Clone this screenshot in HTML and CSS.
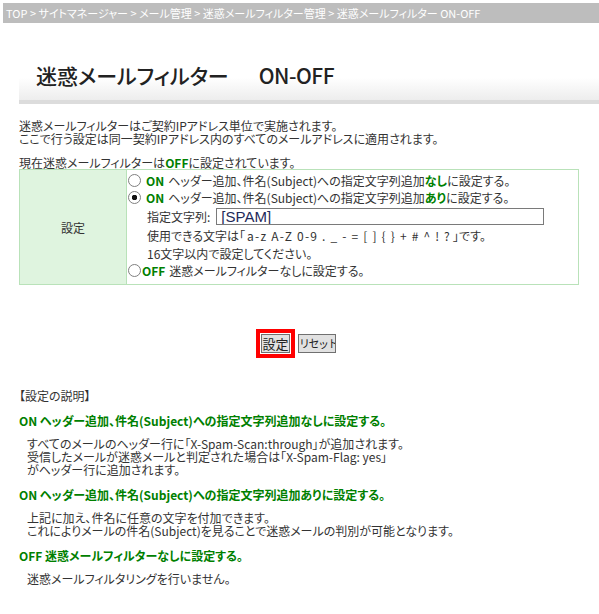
FILE: index.html
```html
<!DOCTYPE html>
<html lang="ja">
<head>
  <meta charset="UTF-8" />
  <meta name="viewport" content="width=device-width, initial-scale=1" />
  <title>迷惑メールフィルター ON-OFF</title>
  <link rel="stylesheet" href="styles.css">
</head>
<body>
  <div class="crumbs">TOP &gt; サイトマネージャー &gt; メール管理 &gt; 迷惑メールフィルター管理 &gt; 迷惑メールフィルター ON-OFF</div>

  <div class="content">
    <h1 class="page-title">迷惑メールフィルター<span class="title-en">ON-OFF</span></h1>

    <p class="intro">迷惑メールフィルターはご契約IPアドレス単位で実施されます。<br>ここで行う設定は同一契約IPアドレス内のすべてのメールアドレスに適用されます。</p>

    <p class="status">現在迷惑メールフィルターは<b class="green">OFF</b>に設定されています。</p>

    <form class="filter-form" onsubmit="return false;">
      <table class="setting">
        <tr>
          <th>設定</th>
          <td>
            <label class="opt"><input type="radio" name="mode" value="on"><b class="green mode">ON</b>ヘッダー追加、件名(Subject)への指定文字列追加<b class="green">なし</b>に設定する。</label>
            <label class="opt"><input type="radio" name="mode" value="tag" checked><b class="green mode">ON</b>ヘッダー追加、件名(Subject)への指定文字列追加<b class="green">あり</b>に設定する。</label>
            <div class="sub sub-input">指定文字列: <input type="text" class="tag" value="[SPAM]"></div>
            <div class="sub">使用できる文字は「<span class="chars">a-z A-Z 0-9 . _ - = [ ] { } + # ^ ! ?</span>」です。</div>
            <div class="sub">16文字以内で設定してください。</div>
            <label class="opt opt-off"><input type="radio" name="mode" value="off"><b class="green mode">OFF</b>迷惑メールフィルターなしに設定する。</label>
          </td>
        </tr>
      </table>

      <div class="actions">
        <button type="submit" class="btn btn-submit">設定</button>
        <button type="reset" class="btn btn-reset">リセット</button>
      </div>
    </form>

    <div class="help">
      <p class="help-title">【設定の説明】</p>
      <dl>
        <dt>ON ヘッダー追加、件名(Subject)への指定文字列追加なしに設定する。</dt>
        <dd>すべてのメールのヘッダー行に「X-Spam-Scan:through」が追加されます。<br>受信したメールが迷惑メールと判定された場合は「X-Spam-Flag: yes」<br>がヘッダー行に追加されます。</dd>
        <dt>ON ヘッダー追加、件名(Subject)への指定文字列追加ありに設定する。</dt>
        <dd>上記に加え、件名に任意の文字を付加できます。<br>これによりメールの件名(Subject)を見ることで迷惑メールの判別が可能となります。</dd>
        <dt>OFF 迷惑メールフィルターなしに設定する。</dt>
        <dd>迷惑メールフィルタリングを行いません。</dd>
      </dl>
    </div>
  </div>
</body>
</html>
```

FILE: styles.css
```css
:root {
  --text: #333;
  --green: #008000;
  --line: #b9e2b9;
  --cell: #dff4df;
}

* {
  box-sizing: border-box;
}

body {
  margin: 3px 0 0 3px;
  font-family: "Noto Sans CJK JP", sans-serif;
  font-size: 12px;
  font-feature-settings: "palt";
  color: var(--text);
  background: #fff;
}

.crumbs {
  height: 20px;
  line-height: 20px;
  padding-left: 3px;
  font-size: 11px;
  background: #bdbdbd;
  color: #fff;
  white-space: nowrap;
}

.content {
  padding: 0 21px 40px 16px;
}

.page-title {
  margin: 27px -21px 0 0;
  height: 54px;
  padding-left: 17px;
  line-height: 50px;
  font-size: 21px;
  font-weight: 500;
  color: #222;
  background: linear-gradient(to bottom, #fff 0, #fff 55%, #ededed 100%);
  border-bottom: 4px solid #dcdcdc;
}

.title-en {
  margin-left: 30px;
  letter-spacing: -0.5px;
}

.intro {
  margin: 15px 0 0;
  line-height: 13px;
}

.status {
  margin: 11px 0 0;
  line-height: 13px;
}

.green {
  color: var(--green);
  font-weight: bold;
}

.setting {
  width: 560px;
  border-collapse: collapse;
  border: 1px solid var(--line);
}

.setting th {
  width: 107px;
  font-weight: normal;
  background: var(--cell);
  border-right: 1px solid var(--line);
}

.setting td {
  padding: 2px 2px 5px 1px;
}

.opt,
.sub {
  display: flex;
  align-items: center;
  height: 17px;
  white-space: nowrap;
}

.opt input {
  appearance: none;
  -webkit-appearance: none;
  width: 13px;
  height: 13px;
  margin: 0 5px 0 0;
  border: 1px solid #808080;
  border-radius: 50%;
  background: #fff;
}

.opt-off input {
  margin-right: 1px;
}

.opt input:checked {
  background: radial-gradient(circle, #111 0, #111 2.5px, #fff 3px);
}

.mode {
  margin-right: 4px;
}

.sub {
  height: 18px;
  padding-left: 19px;
}

.sub-input {
  height: 20px;
}

.chars {
  margin: 0 2px;
  letter-spacing: 1.2px;
}

.tag {
  width: 328px;
  height: 17px;
  margin: 1px 0 0 6px;
  padding: 0 4px;
  border: 1px solid #7a7a7a;
  font-family: "Liberation Sans", sans-serif;
  font-size: 15px;
  color: #1e2a5a;
}

.actions {
  display: flex;
  justify-content: center;
  gap: 8px;
  margin-top: 49px;
}

.btn {
  height: 19px;
  padding: 0;
  overflow: hidden;
  white-space: nowrap;
  font-family: inherit;
  font-size: 13px;
  line-height: 17px;
  color: #222;
  background: #e1e1e1;
  border: 1px solid #707070;
  border-radius: 0;
}

.btn-submit {
  width: 29px;
  outline: 4px solid #f00;
  outline-offset: 1px;
}

.btn-reset {
  width: 38px;
  font-size: 11px;
  letter-spacing: -1.5px;
  text-align: left;
}

.help {
  margin-top: 36px;
}

.help-title {
  margin: 0;
  line-height: 13px;
}

.help dl {
  margin: 0;
}

.help dt {
  margin-top: 12px;
  line-height: 13px;
  font-weight: bold;
  color: var(--green);
}

.help dd {
  margin: 10px 0 0 8px;
  line-height: 13px;
}
```
